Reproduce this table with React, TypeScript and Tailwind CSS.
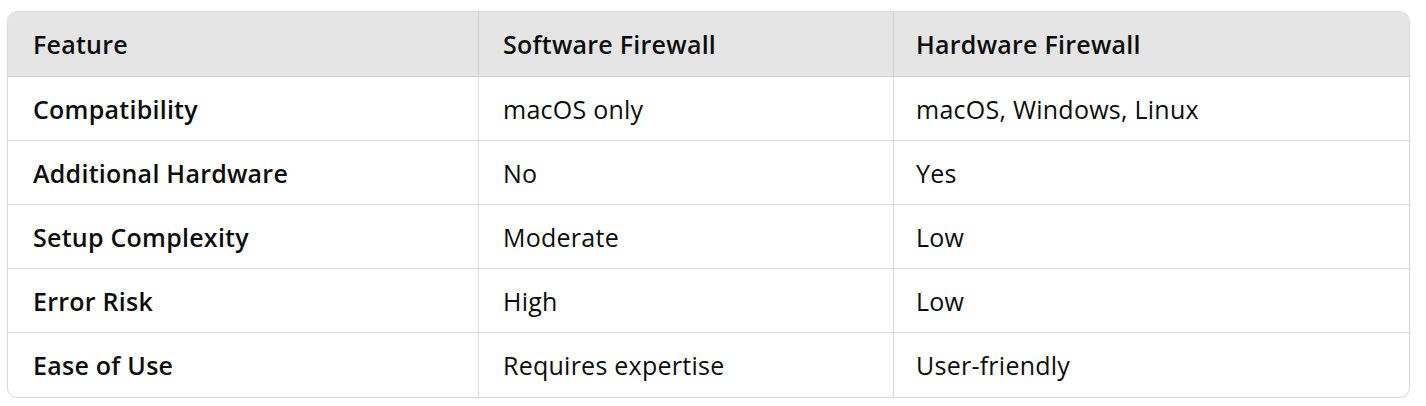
import React from "react";

const rows = [
  ["Compatibility", "macOS only", "macOS, Windows, Linux"],
  ["Additional Hardware", "No", "Yes"],
  ["Setup Complexity", "Moderate", "Low"],
  ["Error Risk", "High", "Low"],
  ["Ease of Use", "Requires expertise", "User-friendly"],
];

export default function App() {
  return (
    <div className="min-h-[406px] bg-white pl-[7px] pt-[11px] text-[25px] tracking-[0.25px] text-[#0d0d0d]" style={{ fontFamily: '"Segoe UI", "Open Sans", sans-serif' }}>
      <div className="w-[1403px] overflow-hidden rounded-[10px] border border-[#d9d9d9]">
        {/* header */}
        <div className="grid h-[65px] grid-cols-[471px_415px_1fr] border-b border-[#cfcfcf] bg-[#e5e5e5] font-semibold">
          <div className="flex items-center border-r border-[#d0d0d0] pl-[25px] pt-[2px]">Feature</div>
          <div className="flex items-center border-r border-[#d0d0d0] pl-[24px] pt-[2px]">Software Firewall</div>
          <div className="flex items-center pl-[22px] pt-[2px]">Hardware Firewall</div>
        </div>
        {rows.map((r, i) => (
          <div
            key={r[0]}
            className={`grid h-[64px] grid-cols-[471px_415px_1fr] ${i < rows.length - 1 ? "border-b border-[#dedede]" : ""}`}
          >
            <div className="flex items-center border-r border-[#dedede] pl-[25px] pt-[2px] font-semibold">{r[0]}</div>
            <div className="flex items-center border-r border-[#dedede] pl-[24px] pt-[2px]">{r[1]}</div>
            <div className="flex items-center pl-[22px] pt-[2px]">{r[2]}</div>
          </div>
        ))}
      </div>
    </div>
  );
}
